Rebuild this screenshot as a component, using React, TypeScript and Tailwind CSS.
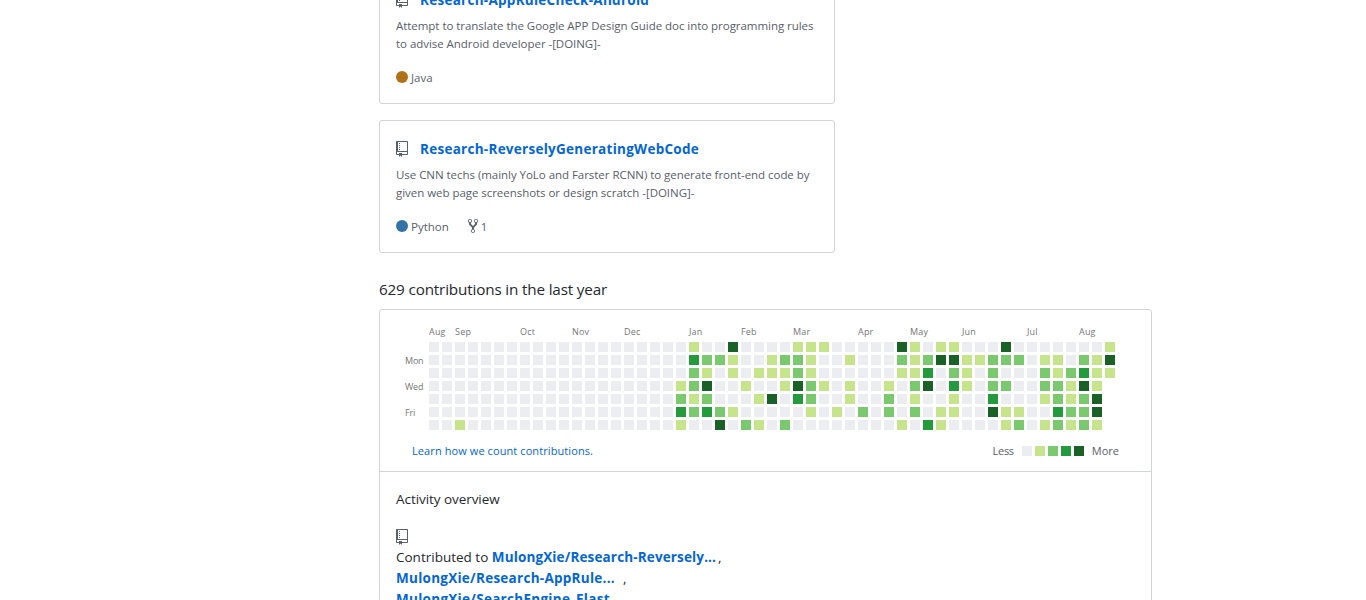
import React from "react";

const LEVELS = ["bg-[#ebedf0]", "bg-[#c6e48b]", "bg-[#7bc96f]", "bg-[#239a3b]", "bg-[#196127]"];

// One string per weekday, one digit per week; "-" marks days still to come.
const DAYS = [
  "0000000000000000000" + "010040000111" + "000004101100" + "0400000001",
  "0000000000000000000" + "032210012210" + "010002124411" + "2220110214",
  "0000000000000000000" + "021010111210" + "000001130210" + "2000212311",
  "0000000000000000000" + "124001001421" + "010010240310" + "220022141-",
  "0000000000000000000" + "212000140320" + "010020100100" + "300012124-",
  "0000000000000000000" + "323210000010" + "102020201100" + "411003224-",
  "0010000000000000000" + "100402102000" + "000001031000" + "012012121-",
];

const MONTHS: { name: string; width: string }[] = [
  { name: "Aug", width: "w-[26px]" },
  { name: "Sep", width: "w-[65px]" },
  { name: "Oct", width: "w-[52px]" },
  { name: "Nov", width: "w-[52px]" },
  { name: "Dec", width: "w-[65px]" },
  { name: "Jan", width: "w-[52px]" },
  { name: "Feb", width: "w-[52px]" },
  { name: "Mar", width: "w-[65px]" },
  { name: "Apr", width: "w-[52px]" },
  { name: "May", width: "w-[52px]" },
  { name: "Jun", width: "w-[65px]" },
  { name: "Jul", width: "w-[52px]" },
  { name: "Aug", width: "w-[36px]" },
];

const WEEKDAYS = ["", "Mon", "", "Wed", "", "Fri", ""];

function RepoIcon() {
  return (
    <svg className="block h-4 w-3 shrink-0 fill-[#586069]" viewBox="0 0 12 16">
      <path fillRule="evenodd" d="M4 9H3V8h1v1zm0-3H3v1h1V6zm0-2H3v1h1V4zm0-2H3v1h1V2zm8-1v12c0 .55-.45 1-1 1H6v2l-1.5-1.5L3 16v-2H1c-.55 0-1-.45-1-1V1c0-.55.45-1 1-1h10c.55 0 1 .45 1 1zm-1 10H1v2h2v-1h3v1h5v-2zm0-10H2v9h9V1z" />
    </svg>
  );
}

function ForkIcon() {
  return (
    <svg className="block h-4 w-2.5 shrink-0 fill-[#586069]" viewBox="0 0 10 16">
      <path fillRule="evenodd" d="M8 1a1.993 1.993 0 0 0-1 3.72V6L5 8 3 6V4.72A1.993 1.993 0 0 0 2 1a1.993 1.993 0 0 0-1 3.72V6.5l3 3v1.78A1.993 1.993 0 0 0 5 15a1.993 1.993 0 0 0 1-3.72V9.5l3-3V4.72A1.993 1.993 0 0 0 8 1zM2 4.2C1.34 4.2.8 3.65.8 3c0-.65.55-1.2 1.2-1.2.65 0 1.2.55 1.2 1.2 0 .65-.55 1.2-1.2 1.2zm3 10c-.66 0-1.2-.55-1.2-1.2 0-.65.55-1.2 1.2-1.2.65 0 1.2.55 1.2 1.2 0 .65-.55 1.2-1.2 1.2zm3-10c-.66 0-1.2-.55-1.2-1.2 0-.65.55-1.2 1.2-1.2.65 0 1.2.55 1.2 1.2 0 .65-.55 1.2-1.2 1.2z" />
    </svg>
  );
}

type RepoCardProps = {
  name: string;
  lines: string[];
  language: string;
  dot: string;
  forks?: number;
};

function RepoCard({ name, lines, language, dot, forks }: RepoCardProps) {
  return (
    <div className="h-[133px] w-[456px] rounded-[3px] border border-[#d1d5da] p-4">
      <div className="flex h-[21px] items-center">
        <div className="pt-0.5"><RepoIcon /></div>
        <a className="ml-3 pt-0.5 text-[13.5px] leading-5 font-bold tracking-[0.27px] text-[#0366d6]">{name}</a>
      </div>
      <div className="mt-2 text-[11.5px] leading-[18px] tracking-[-0.04px] text-[#586069]">
        {lines.map((line) => (
          <p key={line}>{line}</p>
        ))}
      </div>
      <div className="mt-4 flex h-[18px] items-center text-[11.5px] leading-[18px] text-[#586069]">
        <span className={"mr-[3px] mb-0.5 size-3 rounded-full " + dot} />
        {language}
        {forks !== undefined && (
          <span className="ml-[19px] flex items-center gap-[3px]">
            <span className="pb-0.5"><ForkIcon /></span>
            {forks}
          </span>
        )}
      </div>
    </div>
  );
}

function ContributionGraph() {
  return (
    <div className="flex h-[161px] flex-col">
      <div className="flex pt-[15px] pl-[49px] text-[9px] leading-[13px] tracking-[0.2px] text-[#767676]">
        {MONTHS.map((m, i) => (
          <span key={i} className={"shrink-0 " + m.width}>{m.name}</span>
        ))}
      </div>
      <div className="mt-1 flex pl-[25px]">
        <div className="-mt-px w-6 text-[9px] leading-[13px] tracking-[-0.2px] text-[#767676]">
          {WEEKDAYS.map((d, i) => (
            <div key={i} className="h-[13px]">{d}</div>
          ))}
        </div>
        <div className="flex flex-col gap-[3px]">
          {DAYS.map((row, r) => (
            <div key={r} className="flex gap-[3px]">
              {row.split("").map((d, c) => (
                <span key={c} className={"size-2.5 " + (d === "-" ? "" : LEVELS[Number(d)])} />
              ))}
            </div>
          ))}
        </div>
      </div>
      <div className="mt-[10px] flex h-[18px] items-center justify-between pr-8 pl-8 text-[11px] leading-[18px]">
        <a className="tracking-[0.09px] text-[#0366d6]">Learn how we count contributions.</a>
        <div className="flex items-center text-[#586069]">
          <span className="tracking-[-0.3px]">Less</span>
          <span className="mx-2 flex gap-[3px]">
            {LEVELS.map((l) => (
              <span key={l} className={"size-2.5 " + l} />
            ))}
          </span>
          <span>More</span>
        </div>
      </div>
    </div>
  );
}

export default function App() {
  return (
    <div className="h-[600px] w-full overflow-hidden bg-white pl-[379px] font-['Open_Sans','Noto_Sans',sans-serif] whitespace-nowrap text-[#24292e]">
      <div className="-mt-[29px] flex w-[773px] flex-col">
        <div className="flex flex-col gap-4">
          <RepoCard
            name="Research-AppRuleCheck-Android"
            lines={[
              "Attempt to translate the Google APP Design Guide doc into programming rules",
              "to advise Android developer -[DOING]-",
            ]}
            language="Java"
            dot="bg-[#b07219]"
          />
          <RepoCard
            name="Research-ReverselyGeneratingWebCode"
            lines={[
              "Use CNN techs (mainly YoLo and Farster RCNN) to generate front-end code by",
              "given web page screenshots or design scratch -[DOING]-",
            ]}
            language="Python"
            dot="bg-[#3572a5]"
            forks={1}
          />
        </div>
        <h2 className="mt-6 text-[15.25px] leading-6 tracking-[-0.16px]">629 contributions in the last year</h2>
        <div className="mt-2 h-[340px] rounded-[3px] border border-[#d1d5da]">
          <ContributionGraph />
          <div className="border-t border-[#d1d5da] px-4 pt-[17px] text-[13.5px] leading-[21px]">
            <h3 className="tracking-[-0.06px]">Activity overview</h3>
            <div className="mt-[19px]"><RepoIcon /></div>
            <div className="mt-0.5">
              <p>
                <span>Contributed to </span>
                <a className="font-bold tracking-[0.14px] text-[#0366d6]">MulongXie/Research-Reversely...</a>
                <span className="ml-0.5">,</span>
              </p>
              <p>
                <a className="font-bold tracking-[0.27px] text-[#0366d6]">MulongXie/Research-AppRule...</a>
                <span className="ml-2">,</span>
              </p>
              <p>
                <a className="font-bold tracking-[0.29px] text-[#0366d6]">MulongXie/SearchEngine_Elast...</a>
              </p>
            </div>
          </div>
        </div>
      </div>
    </div>
  );
}
